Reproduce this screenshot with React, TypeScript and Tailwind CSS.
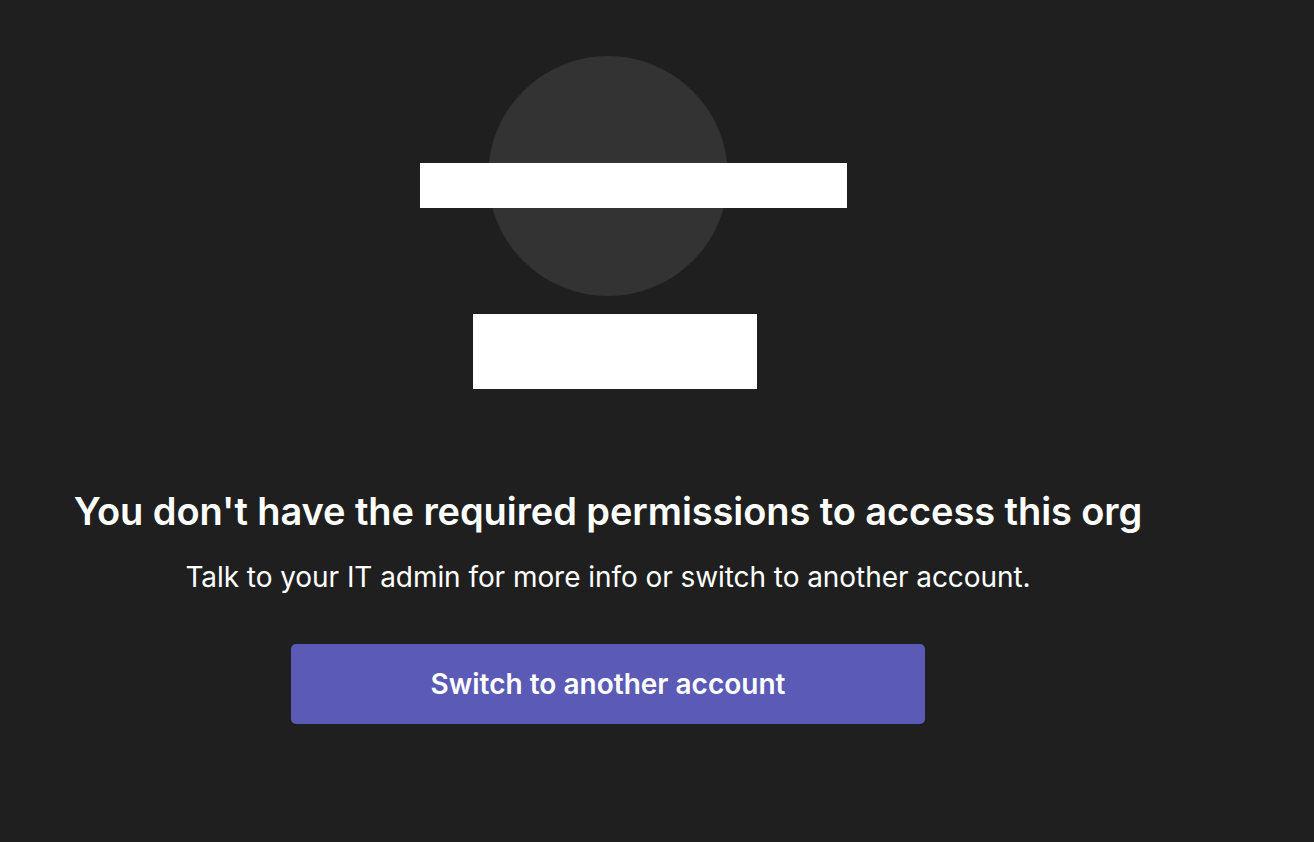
import React from "react";

export default function App() {
  return (
    <div
      className="w-[1314px] h-[842px] bg-[#1f1f1f] overflow-hidden"
      style={{ fontFamily: "Inter, 'Noto Sans', sans-serif" }}
    >
      <div className="w-[1216px] flex flex-col items-center pt-[56px]">
        <div className="relative w-[240px] h-[240px] rounded-full bg-[#333333]">
          <div className="absolute left-[-68px] top-[107px] w-[427px] h-[45px] bg-white" />
        </div>
        <div className="ml-[14px] mt-[18px] w-[284px] h-[75px] bg-white" />
        <h1 className="mt-[99px] text-white text-[38px] leading-[46px] font-semibold tracking-[-0.08px] whitespace-nowrap">
          You don't have the required permissions to access this org
        </h1>
        <p className="mt-[26px] text-white text-[28px] leading-[34px] tracking-[-0.06px] whitespace-nowrap">
          Talk to your IT admin for more info or switch to another account.
        </p>
        <button className="mt-[50px] w-[634px] h-[80px] rounded-[5px] bg-[#5b5ab6] text-white text-[28px] font-semibold flex items-center justify-center">
          Switch to another account
        </button>
      </div>
    </div>
  );
}
